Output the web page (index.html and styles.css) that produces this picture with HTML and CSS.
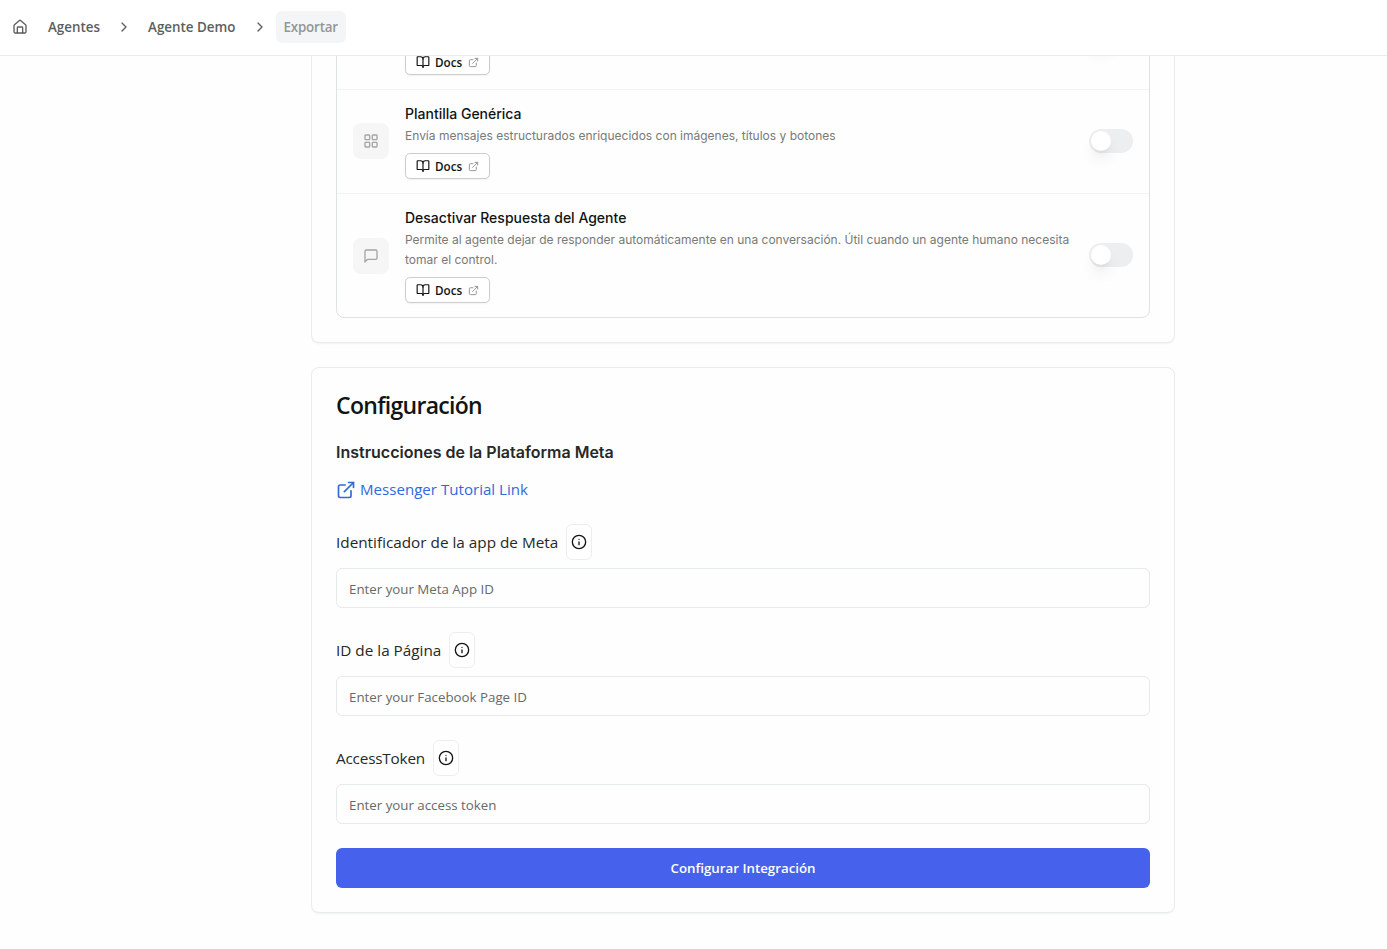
FILE: index.html
```
<!DOCTYPE html>
<html lang="es">
<head>
  <meta charset="UTF-8">
  <title>Exportar - Agente Demo</title>
  <meta name="viewport" content="width=device-width, initial-scale=1.0">
  <link rel="stylesheet" href="styles.css">
</head>
<body>

<!-- Icons -->
<svg class="sprite" aria-hidden="true">
  <symbol id="icon-chevron" viewBox="0 0 24 24"><path d="m9 18 6-6-6-6"/></symbol>
  <symbol id="icon-book" viewBox="0 0 24 24"><path d="M12 7v14"/><path d="M3 18a1 1 0 0 1-1-1V4a1 1 0 0 1 1-1h5a4 4 0 0 1 4 4 4 4 0 0 1 4-4h5a1 1 0 0 1 1 1v13a1 1 0 0 1-1 1h-6a3 3 0 0 0-3 3 3 3 0 0 0-3-3z"/></symbol>
  <symbol id="icon-external" viewBox="0 0 24 24"><path d="M15 3h6v6"/><path d="M10 14 21 3"/><path d="M18 13v6a2 2 0 0 1-2 2H5a2 2 0 0 1-2-2V8a2 2 0 0 1 2-2h6"/></symbol>
  <symbol id="icon-info" viewBox="0 0 24 24"><circle cx="12" cy="12" r="10"/><path d="M12 16v-4"/><path d="M12 8h.01"/></symbol>
</svg>

<header class="topbar">
  <nav class="breadcrumb">
    <a class="home" href="#"><svg class="icon" viewBox="0 0 24 24"><path d="M8 21v-8a1 1 0 0 1 1-1h6a1 1 0 0 1 1 1v8"/><path d="M3 10a2 2 0 0 1 .7-1.5l7-6a2 2 0 0 1 2.6 0l7 6A2 2 0 0 1 21 10v9a2 2 0 0 1-2 2H5a2 2 0 0 1-2-2z"/></svg></a>
    <a class="crumb" href="#">Agentes</a>
    <svg class="icon chevron"><use href="#icon-chevron"/></svg>
    <a class="crumb" href="#">Agente Demo</a>
    <svg class="icon chevron"><use href="#icon-chevron"/></svg>
    <span class="crumb current">Exportar</span>
  </nav>
</header>

<main class="content">
  <section class="card">
    <div class="features">
      <div class="feature">
        <div class="feature-icon"></div>
        <div class="feature-body">
          <h3></h3>
          <p></p>
          <a class="docs-btn" href="#"><svg class="icon book"><use href="#icon-book"/></svg><span>Docs</span><svg class="icon ext"><use href="#icon-external"/></svg></a>
        </div>
        <div class="toggle"></div>
      </div>

      <div class="feature">
        <div class="feature-icon template-icon"><svg class="icon" viewBox="0 0 24 24"><rect x="3" y="3" width="7" height="7" rx="1"/><rect x="14" y="3" width="7" height="7" rx="1"/><rect x="14" y="14" width="7" height="7" rx="1"/><rect x="3" y="14" width="7" height="7" rx="1"/></svg></div>
        <div class="feature-body">
          <h3>Plantilla Genérica</h3>
          <p>Envía mensajes estructurados enriquecidos con imágenes, títulos y botones</p>
          <a class="docs-btn" href="#"><svg class="icon book"><use href="#icon-book"/></svg><span>Docs</span><svg class="icon ext"><use href="#icon-external"/></svg></a>
        </div>
        <div class="toggle"></div>
      </div>

      <div class="feature">
        <div class="feature-icon"><svg class="icon" viewBox="0 0 24 24"><path d="M21 15a2 2 0 0 1-2 2H7l-4 4V5a2 2 0 0 1 2-2h14a2 2 0 0 1 2 2z"/></svg></div>
        <div class="feature-body">
          <h3>Desactivar Respuesta del Agente</h3>
          <p>Permite al agente dejar de responder automáticamente en una conversación. Útil cuando un agente humano necesita<br>tomar el control.</p>
          <a class="docs-btn" href="#"><svg class="icon book"><use href="#icon-book"/></svg><span>Docs</span><svg class="icon ext"><use href="#icon-external"/></svg></a>
        </div>
        <div class="toggle"></div>
      </div>
    </div>
  </section>

  <section class="card">
    <h1>Configuración</h1>
    <h2>Instrucciones de la Plataforma Meta</h2>
    <a class="tutorial" href="#"><svg class="icon"><use href="#icon-external"/></svg><span>Messenger Tutorial Link</span></a>

    <form>
      <div class="field">
        <div class="label-row">
          <label for="appId">Identificador de la app de Meta</label>
          <button type="button" class="info-btn"><svg class="icon"><use href="#icon-info"/></svg></button>
        </div>
        <input type="text" id="appId" placeholder="Enter your Meta App ID">
      </div>
      <div class="field">
        <div class="label-row">
          <label for="pageId">ID de la Página</label>
          <button type="button" class="info-btn"><svg class="icon"><use href="#icon-info"/></svg></button>
        </div>
        <input type="text" id="pageId" placeholder="Enter your Facebook Page ID">
      </div>
      <div class="field">
        <div class="label-row">
          <label class="label-token" for="accessToken">AccessToken</label>
          <button type="button" class="info-btn"><svg class="icon"><use href="#icon-info"/></svg></button>
        </div>
        <input type="text" id="accessToken" placeholder="Enter your access token">
      </div>
      <button type="submit" class="submit-btn">Configurar Integración</button>
    </form>
  </section>
</main>

</body>
</html>
```
FILE: styles.css
```
* {
  box-sizing: border-box;
}

body {
  font-family: 'Segoe UI', 'Open Sans', sans-serif;
  margin: 0;
  height: 100vh;
  display: flex;
  flex-direction: column;
  overflow: hidden;
  background: #fefefe;
  color: #111413;
}

h1, h2, h3, p {
  margin: 0;
}

a {
  color: inherit;
  text-decoration: none;
}

.sprite {
  display: none;
}

.icon {
  width: 16px;
  height: 16px;
  flex-shrink: 0;
  fill: none;
  stroke: currentColor;
  stroke-width: 2;
  stroke-linecap: round;
  stroke-linejoin: round;
}

/* Top bar */
.topbar {
  flex: 0 0 56px;
  border-bottom: 1px solid #e9ebeb;
  background: #fff;
}

.breadcrumb {
  display: flex;
  align-items: center;
  height: 54px;
  padding-left: 12px;
  color: #5b5f5e;
  font-size: 13.4px;
  font-weight: 600;
}

.home {
  display: flex;
  margin-right: 20px;
}

.crumb {
  white-space: nowrap;
  line-height: 20px;
}

.chevron {
  margin: 0 16px;
}

.current {
  margin-left: -8px;
  padding: 6px 8px;
  border-radius: 6px;
  background: #f4f5f6;
  color: #929695;
  letter-spacing: -0.2px;
}

/* Cards */
.content {
  flex: 1;
  min-height: 0;
  display: flex;
  flex-direction: column;
  justify-content: flex-end;
  gap: 24px;
  width: 864px;
  margin-left: 311px;
  padding-bottom: 36px;
  overflow: hidden;
}

.card {
  flex-shrink: 0;
  padding: 24px;
  border: 1px solid #e9ecec;
  border-radius: 8px;
  box-shadow: 0 1px 2px rgba(0, 0, 0, 0.05);
  background: #fefefe;
}

/* Feature list */
.features {
  border: 1px solid #dfe2e2;
  border-radius: 8px;
}

.feature {
  display: flex;
  align-items: center;
  gap: 16px;
  padding: 14px 16px;
}

.feature + .feature {
  border-top: 1px solid #f2f4f4;
}

.feature-icon {
  display: flex;
  align-items: center;
  justify-content: center;
  width: 36px;
  height: 36px;
  border-radius: 8px;
  background: #f6f6f6;
  color: #a5a5a5;
}

.template-icon {
  margin-bottom: 1px;
}

.feature-body {
  flex: 1;
  white-space: nowrap;
}

.feature-body h3 {
  min-height: 20px;
  font-family: Inter, sans-serif;
  font-size: 14px;
  font-weight: 500;
  line-height: 20px;
}

.feature-body p {
  min-height: 20px;
  margin: 2px 0 7px;
  font-family: Inter, sans-serif;
  font-size: 12px;
  line-height: 20px;
  color: #777a79;
}

.docs-btn {
  display: flex;
  align-items: center;
  width: 85px;
  height: 26px;
  padding-left: 10px;
  border: 1px solid #cbcecd;
  border-radius: 5px;
  box-shadow: 0 1px 2px rgba(0, 0, 0, 0.05);
  background: #fff;
  font-size: 11.7px;
  font-weight: 600;
  line-height: 12px;
}

.docs-btn .book {
  width: 14px;
  height: 14px;
  margin-right: 5px;
}

.docs-btn .ext {
  width: 11px;
  height: 11px;
  margin-left: auto;
  margin-right: 10px;
  color: #8c8f8e;
}

.toggle {
  width: 44px;
  height: 24px;
  margin-bottom: 1px;
  padding: 2px;
  border-radius: 12px;
  background: #eceeef;
}

.toggle::before {
  content: "";
  display: block;
  width: 20px;
  height: 20px;
  border-radius: 50%;
  background: #fff;
  box-shadow: 0 10px 15px -3px rgba(0, 0, 0, 0.1), 0 4px 6px -4px rgba(0, 0, 0, 0.1);
}

/* Configuration */
h1 {
  font-size: 23px;
  font-weight: 600;
  line-height: 26px;
  letter-spacing: -0.7px;
}

h2 {
  margin-top: 22px;
  font-family: Inter, sans-serif;
  font-size: 16px;
  font-weight: 600;
  line-height: 24px;
  color: #262928;
}

.tutorial {
  display: flex;
  align-items: center;
  gap: 4px;
  margin-top: 13px;
  font-size: 15.1px;
  line-height: 24px;
  color: #3069dc;
}

.tutorial .icon {
  width: 20px;
  height: 20px;
  margin-top: 1px;
}

form {
  margin-top: 23px;
}

.field {
  margin-bottom: 24px;
}

.label-row {
  display: flex;
  align-items: center;
  gap: 8px;
  margin-bottom: 8px;
  font-size: 15.3px;
  color: #262928;
}

.label-token {
  letter-spacing: -0.19px;
}

.info-btn {
  display: flex;
  align-items: center;
  justify-content: center;
  width: 26px;
  height: 36px;
  padding: 0;
  border: 1px solid #eceeee;
  border-radius: 6px;
  background: #fff;
  color: #111413;
}

input {
  display: block;
  width: 100%;
  height: 40px;
  padding: 1px 12px 0;
  border: 1px solid #e7eaea;
  border-radius: 6px;
  background: #fefefe;
  font-family: inherit;
  font-size: 13.3px;
}

input::placeholder {
  color: #666a69;
}

.submit-btn {
  width: 100%;
  height: 40px;
  padding: 0;
  border: none;
  border-radius: 6px;
  background: #4661eb;
  color: #fff;
  font-family: inherit;
  font-size: 13.3px;
  font-weight: 600;
}
```
